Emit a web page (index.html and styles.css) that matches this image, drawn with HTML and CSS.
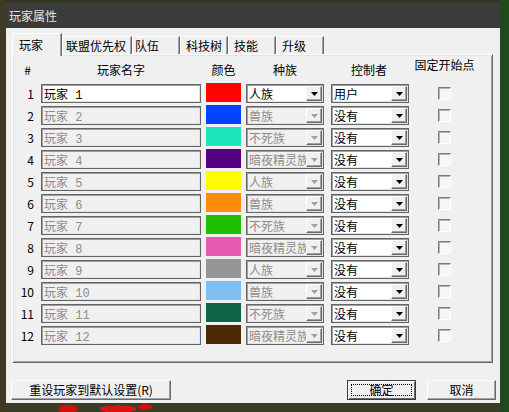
FILE: index.html
```html
<!DOCTYPE html>
<html lang="zh-CN">
<head>
<meta charset="utf-8">
<link rel="stylesheet" href="styles.css">
</head>
<body>
<div class="dialog">
  <div class="titlebar">玩家属性</div>
  <div class="body">
    <div class="tabs">
      <div class="tab active t1">玩家</div>
      <div class="tab t2">联盟优先权</div>
      <div class="tab t3">队伍</div>
      <div class="tab t4">科技树</div>
      <div class="tab t5">技能</div>
      <div class="tab t6">升级</div>
    </div>
    <div class="panel">
      <div class="grid">
        <div class="hd num">#</div>
        <div class="hd">玩家名字</div>
        <div class="hd">颜色</div>
        <div class="hd">种族</div>
        <div class="hd">控制者</div>
        <div class="hd top">固定开始点</div>

        <div class="num">1</div>
        <div class="field on">玩家<span class="n"> 1</span></div>
        <div class="swatch" style="background:#ff0303"></div>
        <div class="combo on"><span class="val">人族</span><span class="btn"><svg width="7" height="4" viewBox="0 0 7 4"><path d="M0 0h7L3.5 4z"/></svg></span></div>
        <div class="combo on ctrl"><span class="val">用户</span><span class="btn"><svg width="7" height="4" viewBox="0 0 7 4"><path d="M0 0h7L3.5 4z"/></svg></span></div>
        <div class="chk"><span class="box"></span></div>

        <div class="num">2</div>
        <div class="field">玩家<span class="n"> 2</span></div>
        <div class="swatch" style="background:#0042ff"></div>
        <div class="combo"><span class="val">兽族</span><span class="btn"><svg width="7" height="4" viewBox="0 0 7 4"><path d="M0 0h7L3.5 4z"/></svg></span></div>
        <div class="combo on ctrl"><span class="val">没有</span><span class="btn"><svg width="7" height="4" viewBox="0 0 7 4"><path d="M0 0h7L3.5 4z"/></svg></span></div>
        <div class="chk"><span class="box"></span></div>

        <div class="num">3</div>
        <div class="field">玩家<span class="n"> 3</span></div>
        <div class="swatch" style="background:#1ce6b9"></div>
        <div class="combo"><span class="val">不死族</span><span class="btn"><svg width="7" height="4" viewBox="0 0 7 4"><path d="M0 0h7L3.5 4z"/></svg></span></div>
        <div class="combo on ctrl"><span class="val">没有</span><span class="btn"><svg width="7" height="4" viewBox="0 0 7 4"><path d="M0 0h7L3.5 4z"/></svg></span></div>
        <div class="chk"><span class="box"></span></div>

        <div class="num">4</div>
        <div class="field">玩家<span class="n"> 4</span></div>
        <div class="swatch" style="background:#540081"></div>
        <div class="combo"><span class="val">暗夜精灵族</span><span class="btn"><svg width="7" height="4" viewBox="0 0 7 4"><path d="M0 0h7L3.5 4z"/></svg></span></div>
        <div class="combo on ctrl"><span class="val">没有</span><span class="btn"><svg width="7" height="4" viewBox="0 0 7 4"><path d="M0 0h7L3.5 4z"/></svg></span></div>
        <div class="chk"><span class="box"></span></div>

        <div class="num">5</div>
        <div class="field">玩家<span class="n"> 5</span></div>
        <div class="swatch" style="background:#fffc01"></div>
        <div class="combo"><span class="val">人族</span><span class="btn"><svg width="7" height="4" viewBox="0 0 7 4"><path d="M0 0h7L3.5 4z"/></svg></span></div>
        <div class="combo on ctrl"><span class="val">没有</span><span class="btn"><svg width="7" height="4" viewBox="0 0 7 4"><path d="M0 0h7L3.5 4z"/></svg></span></div>
        <div class="chk"><span class="box"></span></div>

        <div class="num">6</div>
        <div class="field">玩家<span class="n"> 6</span></div>
        <div class="swatch" style="background:#fe8a0e"></div>
        <div class="combo"><span class="val">兽族</span><span class="btn"><svg width="7" height="4" viewBox="0 0 7 4"><path d="M0 0h7L3.5 4z"/></svg></span></div>
        <div class="combo on ctrl"><span class="val">没有</span><span class="btn"><svg width="7" height="4" viewBox="0 0 7 4"><path d="M0 0h7L3.5 4z"/></svg></span></div>
        <div class="chk"><span class="box"></span></div>

        <div class="num">7</div>
        <div class="field">玩家<span class="n"> 7</span></div>
        <div class="swatch" style="background:#20c000"></div>
        <div class="combo"><span class="val">不死族</span><span class="btn"><svg width="7" height="4" viewBox="0 0 7 4"><path d="M0 0h7L3.5 4z"/></svg></span></div>
        <div class="combo on ctrl"><span class="val">没有</span><span class="btn"><svg width="7" height="4" viewBox="0 0 7 4"><path d="M0 0h7L3.5 4z"/></svg></span></div>
        <div class="chk"><span class="box"></span></div>

        <div class="num">8</div>
        <div class="field">玩家<span class="n"> 8</span></div>
        <div class="swatch" style="background:#e55bb0"></div>
        <div class="combo"><span class="val">暗夜精灵族</span><span class="btn"><svg width="7" height="4" viewBox="0 0 7 4"><path d="M0 0h7L3.5 4z"/></svg></span></div>
        <div class="combo on ctrl"><span class="val">没有</span><span class="btn"><svg width="7" height="4" viewBox="0 0 7 4"><path d="M0 0h7L3.5 4z"/></svg></span></div>
        <div class="chk"><span class="box"></span></div>

        <div class="num">9</div>
        <div class="field">玩家<span class="n"> 9</span></div>
        <div class="swatch" style="background:#959697"></div>
        <div class="combo"><span class="val">人族</span><span class="btn"><svg width="7" height="4" viewBox="0 0 7 4"><path d="M0 0h7L3.5 4z"/></svg></span></div>
        <div class="combo on ctrl"><span class="val">没有</span><span class="btn"><svg width="7" height="4" viewBox="0 0 7 4"><path d="M0 0h7L3.5 4z"/></svg></span></div>
        <div class="chk"><span class="box"></span></div>

        <div class="num">10</div>
        <div class="field">玩家<span class="n"> 10</span></div>
        <div class="swatch" style="background:#7ebff1"></div>
        <div class="combo"><span class="val">兽族</span><span class="btn"><svg width="7" height="4" viewBox="0 0 7 4"><path d="M0 0h7L3.5 4z"/></svg></span></div>
        <div class="combo on ctrl"><span class="val">没有</span><span class="btn"><svg width="7" height="4" viewBox="0 0 7 4"><path d="M0 0h7L3.5 4z"/></svg></span></div>
        <div class="chk"><span class="box"></span></div>

        <div class="num">11</div>
        <div class="field">玩家<span class="n"> 11</span></div>
        <div class="swatch" style="background:#106246"></div>
        <div class="combo"><span class="val">不死族</span><span class="btn"><svg width="7" height="4" viewBox="0 0 7 4"><path d="M0 0h7L3.5 4z"/></svg></span></div>
        <div class="combo on ctrl"><span class="val">没有</span><span class="btn"><svg width="7" height="4" viewBox="0 0 7 4"><path d="M0 0h7L3.5 4z"/></svg></span></div>
        <div class="chk"><span class="box"></span></div>

        <div class="num">12</div>
        <div class="field">玩家<span class="n"> 12</span></div>
        <div class="swatch" style="background:#4e2a04"></div>
        <div class="combo"><span class="val">暗夜精灵族</span><span class="btn"><svg width="7" height="4" viewBox="0 0 7 4"><path d="M0 0h7L3.5 4z"/></svg></span></div>
        <div class="combo on ctrl"><span class="val">没有</span><span class="btn"><svg width="7" height="4" viewBox="0 0 7 4"><path d="M0 0h7L3.5 4z"/></svg></span></div>
        <div class="chk"><span class="box"></span></div>
      </div>
    </div>
    <div class="btnrow">
      <div class="button reset">重设玩家到默认设置(R)</div>
      <div class="spacer"></div>
      <div class="button ok"><span class="focus">确定</span></div>
      <div class="button cancel">取消</div>
    </div>
  </div>
</div>
</body>
</html>
```
FILE: styles.css
```css
html, body {
  margin: 0;
  padding: 0;
}
body {
  width: 509px;
  height: 412px;
  overflow: hidden;
  font-family: "Noto Sans CJK SC", "Noto Sans", sans-serif;
  font-size: 12px;
  color: #000;
  background:
    radial-gradient(ellipse 14px 6px at 68px 409px, #d01010 70%, transparent 72%),
    radial-gradient(ellipse 26px 5px at 118px 409px, #d81414 70%, transparent 72%),
    radial-gradient(ellipse 10px 4px at 145px 407px, #c81010 70%, transparent 72%),
    linear-gradient(to right, #3e3b24 0 6px, transparent 6px 500px, #1f4a1d 500px),
    linear-gradient(to bottom, #2f3620 0 403px, #3a3e26 403px);
}
.dialog {
  margin: 2px 0 0 6px;
  width: 494px;
  height: 401px;
  display: flex;
  flex-direction: column;
}
.titlebar {
  height: 26px;
  background: #3b3b3b;
  color: #e4e4e4;
  padding-left: 3px;
  display: flex;
  align-items: center;
  box-sizing: border-box;
}
.body {
  flex: 1;
  background: #f0f0f0;
  padding: 5px 7px 0 6px;
  display: flex;
  flex-direction: column;
}
.tabs {
  display: flex;
  align-items: flex-start;
  height: 23px;
  margin-bottom: -2px;
  position: relative;
  z-index: 1;
}
.tab {
  box-sizing: border-box;
  height: 18px;
  margin-top: 3px;
  background: #f0f0f0;
  border-top: 1px solid #fff;
  border-left: 1px solid #fff;
  border-right: 1px solid #696969;
  box-shadow: inset -1px 0 #a0a0a0;
  padding-left: 5px;
  line-height: 17px;
  white-space: nowrap;
}
.tab.active {
  height: 23px;
  margin-top: 0;
  line-height: 22px;
  padding-left: 6px;
}
.t1 { width: 50px; }
.t2 { width: 70px; padding-left: 3px; }
.t3 { width: 48px; padding-left: 2px; }
.t4 { width: 48px; }
.t5 { width: 48px; }
.t6 { width: 48px; }
.panel {
  width: 481px;
  height: 309px;
  box-sizing: border-box;
  border-top: 1px solid #fff;
  border-left: 1px solid #fff;
  border-right: 1px solid #696969;
  border-bottom: 1px solid #696969;
  box-shadow: inset 1px 1px #e3e3e3, inset -1px -1px #a0a0a0;
  padding: 3px 1px 0 1px;
}
.grid {
  display: grid;
  grid-template-columns: 22px 160px 35px 78px 80px 61px;
  grid-template-rows: 23px repeat(12, 19px);
  column-gap: 5px;
  row-gap: 3px;
}
.hd {
  text-align: center;
  align-self: center;
  line-height: 14px;
  white-space: nowrap;
}
.hd.num { text-align: right; padding-right: 5px; }
.hd.top { align-self: start; }
.num {
  text-align: right;
  padding-right: 2px;
  line-height: 19px;
}
.field {
  box-sizing: border-box;
  height: 19px;
  border: 1px solid #646464;
  box-shadow: inset 1px 1px #a0a0a0, inset -1px -1px #e3e3e3;
  background: #f0f0f0;
  color: #8c8c8c;
  padding-left: 2px;
  line-height: 17px;
  white-space: pre;
}
.n {
  font-family: "Liberation Mono", monospace;
  font-size: 12px;
}
.field.on {
  background: #fff;
  color: #000;
}
.swatch {
  height: 19px;
  margin-top: -1px;
}
.combo {
  box-sizing: border-box;
  height: 19px;
  border: 1px solid #646464;
  box-shadow: inset 1px 1px #a0a0a0, inset -1px -1px #e3e3e3;
  background: #f0f0f0;
  color: #8c8c8c;
  display: flex;
  padding: 1px;
  overflow: hidden;
}
.combo.on {
  background: #fff;
  color: #000;
}
.combo.ctrl {
  width: 78px;
  justify-self: end;
}
.val {
  flex: 1;
  overflow: hidden;
  white-space: nowrap;
  line-height: 15px;
  padding-left: 1px;
}
.btn {
  box-sizing: border-box;
  width: 16px;
  height: 15px;
  background: #f0f0f0;
  border-top: 1px solid #fff;
  border-left: 1px solid #fff;
  border-right: 1px solid #696969;
  border-bottom: 1px solid #696969;
  box-shadow: inset -1px -1px #a0a0a0;
  display: flex;
  align-items: center;
  justify-content: center;
  fill: #000;
}
.combo:not(.on) .btn { fill: #a0a0a0; }
.chk {
  display: flex;
  justify-content: center;
  align-items: center;
}
.box {
  box-sizing: border-box;
  width: 13px;
  height: 13px;
  border: 1px solid;
  border-color: #7a7a7a #fff #fff #7a7a7a;
  box-shadow: inset 1px 1px #b4b4b4;
  background: #f6f6f6;
}
.btnrow {
  display: flex;
  margin-top: 17px;
  margin-left: -1px;
  margin-right: -3px;
}
.spacer { flex: 1; }
.button {
  box-sizing: border-box;
  height: 20px;
  background: #f0f0f0;
  border-top: 1px solid #fff;
  border-left: 1px solid #fff;
  border-right: 1px solid #696969;
  border-bottom: 1px solid #696969;
  box-shadow: inset -1px -1px #a0a0a0;
  display: flex;
  align-items: center;
  justify-content: center;
  line-height: 16px;
  white-space: nowrap;
}
.reset { width: 160px; }
.ok {
  width: 69px;
  margin-right: 11px;
  border: 1px solid #3a3a3a;
  box-shadow: inset 1px 1px #fff, inset -1px -1px #696969;
  padding: 3px;
}
.focus {
  flex: 1;
  align-self: stretch;
  border: 1px dotted #000;
  display: flex;
  align-items: center;
  justify-content: center;
}
.cancel { width: 69px; }
```
